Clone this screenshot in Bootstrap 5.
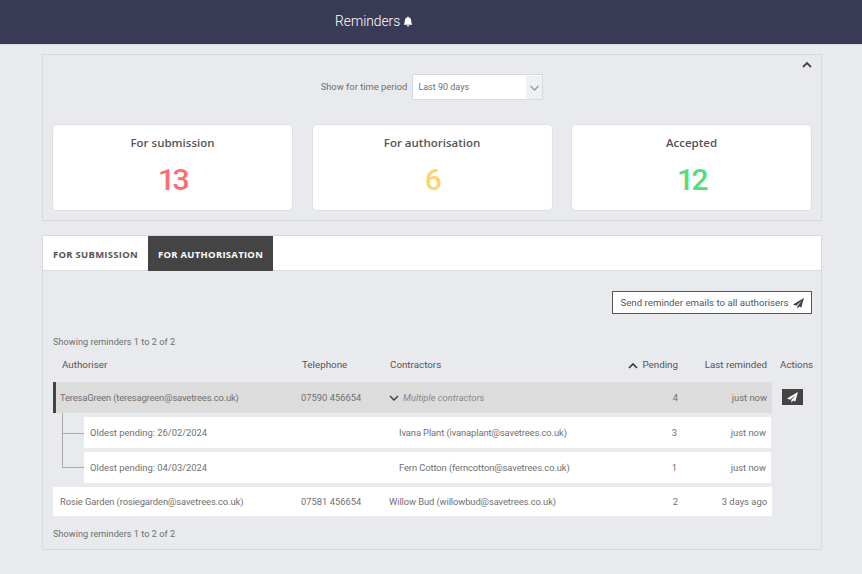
<!DOCTYPE html>
<html lang="en"><head><meta charset="utf-8"><title>Reminders</title>
<link href="https://cdn.jsdelivr.net/npm/bootstrap@5.3.0/dist/css/bootstrap.min.css" rel="stylesheet">
<style>
html,body{height:100%}
body{background:#e9eaed;font-family:"Roboto","Open Sans",sans-serif;font-size:9.4px;color:#6f6f6f;overflow:hidden}
.topbar{height:45px;background:#393b56;color:#fff;padding:0 0 1px 335px;font-size:13.8px;font-weight:300;gap:3px;border-bottom:1px solid #d9d9d9}
.wrap{width:780px;margin-left:42px}
.panel-a{margin-top:9px;height:167px;border:1px solid #d8d9dc;padding:0 9px;position:relative}
.collapse-ic{position:absolute;right:9px;top:6px;width:10px;height:7px}
.period{height:26px;margin-top:19px;margin-bottom:24px;gap:5px}
.period-sel{width:131px;height:26px;background:#fff;border:1px solid #d8d9dc;padding:1px 0 0 5px;font-size:9px}
.period-arrow{width:16px;height:23px;background:#eef0f2}
.stat{width:241px;height:87px;background:#fff;border:1px solid #dfe0e3;border-radius:5px;padding-top:9px}
.stat-t{font-family:"Open Sans",sans-serif;font-size:11.5px;font-weight:600;color:#555;line-height:17px}
.stat-n{font-size:30px;line-height:36px;margin-top:11px;font-weight:500;letter-spacing:-2.5px}
.c-red{color:#ff6b6f}.c-yel{color:#ffd36e}.c-grn{color:#54dd74}
.panel-b{margin-top:14px;height:315px;border:1px solid #d8d9dc}
.tabsbar{height:35px;background:#fff;border-bottom:1px solid #dcdde0}
.tabx{font-family:"Open Sans",sans-serif;padding:0 10px;line-height:37px;font-size:9.45px;font-weight:700;letter-spacing:.3px;color:#555;height:35px}
.tabx.on{background:#444;color:#fff}
.tabbody{padding:20px 9px 0 10px}
.sendall{height:23px;width:200px;background:#fff;border:1px solid #555;color:#555;gap:4px;font-size:9.7px;padding-top:1px}
.showing{line-height:14px;font-size:9.2px}
.show1{margin-top:21px}
.gridrows{width:719px;flex:none}
.hdr{height:33px;color:#555;font-size:9.8px}
.cell1{width:249px;padding-left:9px;flex:none}.cell2{width:88px;flex:none}.cell3{flex:1}.cell4{width:65px;text-align:right;padding-right:5px;flex:none}.cell5{width:89px;text-align:right;padding-right:5px;flex:none}
.rowx{background:#fff;height:29px;padding:2px 0 0 7px}
.rowx .cell1{padding-left:0;width:241px}
.r-open{background:#dcdcdc;height:31px;border-left:3px solid #444;padding:1px 0 0 4px}
.subwrap{position:relative;padding-left:31px;padding-top:4px}
.subrow{background:#fff;height:31px;margin-bottom:4px;padding:2px 0 0 6px;margin-right:1px}
.subrow .s1{width:309px;flex:none}
.vline{position:absolute;left:9px;top:0;width:22px;height:55px;border-left:1px solid #aaa;border-bottom:1px solid #aaa}
.hline{position:absolute;left:9px;top:20px;width:22px;border-top:1px solid #aaa}
.rm{font-style:italic;color:#888}
.mailx{letter-spacing:-.15px}
.mailz{letter-spacing:-.1px}
.act-col{width:45px;margin-left:3px;flex:none}
.act-h{height:33px;color:#555;padding-left:5px;font-size:9.8px}
.act-b{width:21px;height:16px;background:#444;margin:7px 0 0 7px}
.foot{margin-top:11px}
</style></head><body>
<div class="topbar d-flex align-items-center"><span>Reminders</span>
<svg width="10" height="11" viewBox="0 0 16 16" fill="#fff"><path d="M8 16a2 2 0 0 0 2-2H6a2 2 0 0 0 2 2zm.995-14.901a1 1 0 1 0-1.99 0A5.002 5.002 0 0 0 3 6c0 1.098-.5 6-2 7h14c-1.5-1-2-5.902-2-7 0-2.42-1.72-4.44-4.005-4.901z"/></svg></div>
<div class="wrap">
 <div class="panel-a">
  <svg class="collapse-ic" viewBox="0 0 10 7" fill="none" stroke="#444" stroke-width="1.8"><path d="M1 6l4-4 4 4"/></svg>
  <div class="period d-flex justify-content-center align-items-center"><span>Show for time period</span>
   <div class="period-sel d-flex align-items-center justify-content-between"><span>Last 90 days</span>
    <span class="period-arrow d-flex align-items-center justify-content-center"><svg width="9" height="6" viewBox="0 0 9 6" fill="none" stroke="#999" stroke-width="1.3"><path d="M.5 1l4 4 4-4"/></svg></span></div></div>
  <div class="d-flex justify-content-between">
   <div class="stat text-center"><div class="stat-t">For submission</div><div class="stat-n c-red">13</div></div>
   <div class="stat text-center"><div class="stat-t">For authorisation</div><div class="stat-n c-yel">6</div></div>
   <div class="stat text-center"><div class="stat-t">Accepted</div><div class="stat-n c-grn">12</div></div>
  </div>
 </div>
 <div class="panel-b">
  <div class="tabsbar d-flex"><div class="tabx">FOR SUBMISSION</div><div class="tabx on">FOR AUTHORISATION</div></div>
  <div class="tabbody">
   <div class="d-flex justify-content-end"><div class="sendall d-flex align-items-center justify-content-center"><span>Send reminder emails to all authorisers</span>
    <svg width="11" height="11" viewBox="0 0 16 16" fill="#444"><path d="M15.9.1 0 9.3l4.6 1.9L13 3.6 6.3 12v3.7l2.6-3.2 3.2 1.4z"/></svg></div></div>
   <div class="showing show1">Showing reminders 1 to 2 of 2</div>
   <div class="d-flex">
    <div class="gridrows">
     <div class="hdr d-flex align-items-center">
      <div class="cell1">Authoriser</div><div class="cell2">Telephone</div><div class="cell3">Contractors</div>
      <div class="cell4 d-flex align-items-center justify-content-end gap-1"><svg width="10" height="6" viewBox="0 0 10 6" fill="none" stroke="#333" stroke-width="1.6"><path d="M1 5l4-4 4 4"/></svg><span>Pending</span></div>
      <div class="cell5">Last reminded</div></div>
     <div class="rowx r-open d-flex align-items-center">
      <div class="cell1 mailx">TeresaGreen (teresagreen@savetrees.co.uk)</div><div class="cell2">07590 456654</div>
      <div class="cell3 d-flex align-items-center gap-1"><svg width="10" height="6" viewBox="0 0 10 6" fill="none" stroke="#444" stroke-width="1.5"><path d="M1 1l4 4 4-4"/></svg><span class="rm">Multiple contractors</span></div>
      <div class="cell4">4</div><div class="cell5">just now</div></div>
     <div class="subwrap"><div class="vline"></div><div class="hline"></div>
      <div class="subrow d-flex align-items-center"><div class="s1">Oldest pending: 26/02/2024</div><div class="cell3 mailz">Ivana Plant (ivanaplant@savetrees.co.uk)</div><div class="cell4">3</div><div class="cell5">just now</div></div>
      <div class="subrow d-flex align-items-center"><div class="s1">Oldest pending: 04/03/2024</div><div class="cell3 mailz">Fern Cotton (ferncotton@savetrees.co.uk)</div><div class="cell4">1</div><div class="cell5">just now</div></div>
     </div>
     <div class="rowx d-flex align-items-center">
      <div class="cell1 mailz">Rosie Garden (rosiegarden@savetrees.co.uk)</div><div class="cell2">07581 456654</div><div class="cell3 mailz">Willow Bud (willowbud@savetrees.co.uk)</div><div class="cell4">2</div><div class="cell5">3 days ago</div></div>
    </div>
    <div class="act-col"><div class="act-h d-flex align-items-center">Actions</div>
     <div class="act-b d-flex align-items-center justify-content-center"><svg width="11" height="11" viewBox="0 0 16 16" fill="#fff"><path d="M15.9.1 0 9.3l4.6 1.9L13 3.6 6.3 12v3.7l2.6-3.2 3.2 1.4z"/></svg></div></div>
   </div>
   <div class="showing foot">Showing reminders 1 to 2 of 2</div>
  </div>
 </div>
</div>
<script src="https://cdn.jsdelivr.net/npm/bootstrap@5.3.0/dist/js/bootstrap.bundle.min.js"></script>
</body></html>
